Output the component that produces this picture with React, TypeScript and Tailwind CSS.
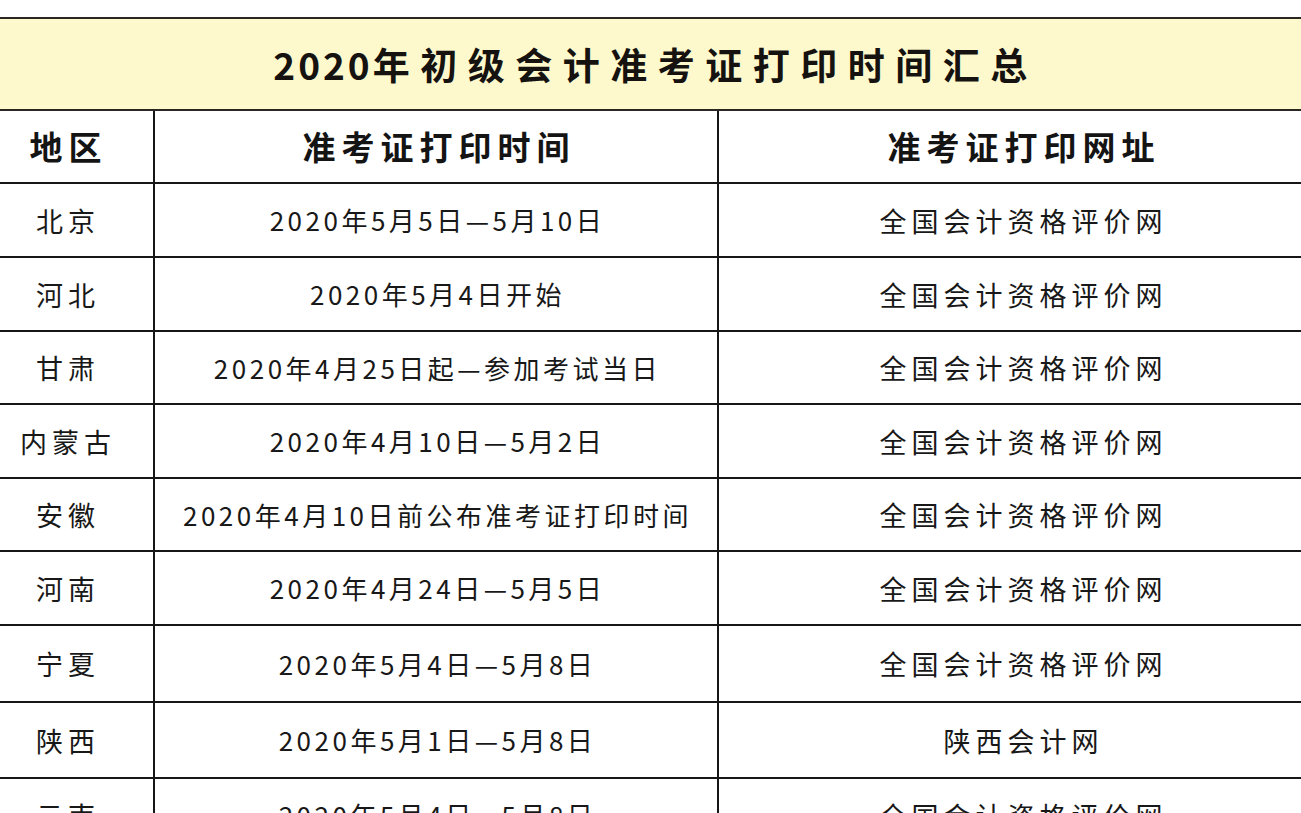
import React from "react";

type Row = { region: string; time: string; site: string; h: string };

const rows: Row[] = [
  { region: "北京", time: "2020年5月5日—5月10日", site: "全国会计资格评价网", h: "h-[74px]" },
  { region: "河北", time: "2020年5月4日开始", site: "全国会计资格评价网", h: "h-[74px]" },
  { region: "甘肃", time: "2020年4月25日起—参加考试当日", site: "全国会计资格评价网", h: "h-[73px]" },
  { region: "内蒙古", time: "2020年4月10日—5月2日", site: "全国会计资格评价网", h: "h-[74px]" },
  { region: "安徽", time: "2020年4月10日前公布准考证打印时间", site: "全国会计资格评价网", h: "h-[73px]" },
  { region: "河南", time: "2020年4月24日—5月5日", site: "全国会计资格评价网", h: "h-[74px]" },
  { region: "宁夏", time: "2020年5月4日—5月8日", site: "全国会计资格评价网", h: "h-[77px]" },
  { region: "陕西", time: "2020年5月1日—5月8日", site: "陕西会计网", h: "h-[76px]" },
  { region: "云南", time: "2020年5月4日—5月8日", site: "全国会计资格评价网", h: "h-[74px]" },
];

const font = { fontFamily: '"Noto Sans CJK SC", "Noto Sans", sans-serif' };

export default function App() {
  return (
    <div className="w-[1301px] h-[813px] overflow-hidden bg-white" style={font}>
      <div className="w-[1345px] -ml-[22px] pt-[17px]">
        {/* Title */}
        <div className="h-[94px] border-t-2 border-b-2 border-[#2a2622] bg-[#fdf9cd] flex items-center justify-center">
          <span className="text-[37px] font-bold text-[#151210] tracking-[10.5px] pl-[10px] leading-none">
            <span className="tracking-[3px]">2020</span>年初级会计准考证打印时间汇总
          </span>
        </div>
        {/* Header */}
        <div className="flex h-[73px] border-b-2 border-[#161616] text-[33px] font-bold text-[#141414] leading-none">
          <div className="w-[177px] shrink-0 border-r-2 border-[#161616] flex items-center justify-center tracking-[6px] pl-[6px]">
            地区
          </div>
          <div className="w-[564px] shrink-0 border-r-2 border-[#161616] flex items-center justify-center tracking-[6px] pl-[6px]">
            准考证打印时间
          </div>
          <div className="flex-1 flex items-center justify-center tracking-[6px] pl-[6px]">
            准考证打印网址
          </div>
        </div>
        {/* Body */}
        {rows.map((r) => (
          <div
            key={r.region}
            className={`flex ${r.h} border-b-2 border-[#161616] text-[#181818] leading-none`}
          >
            <div className="w-[177px] shrink-0 border-r-2 border-[#161616] flex items-center justify-center text-[27px] tracking-[5px] pl-[5px]">
              {r.region}
            </div>
            <div className="w-[564px] shrink-0 border-r-2 border-[#161616] flex items-center justify-center text-[26px] tracking-[3.5px] pl-[3px] whitespace-nowrap">
              {r.time}
            </div>
            <div className="flex-1 flex items-center justify-center text-[27px] tracking-[5px] pl-[5px] whitespace-nowrap">
              {r.site}
            </div>
          </div>
        ))}
      </div>
    </div>
  );
}
